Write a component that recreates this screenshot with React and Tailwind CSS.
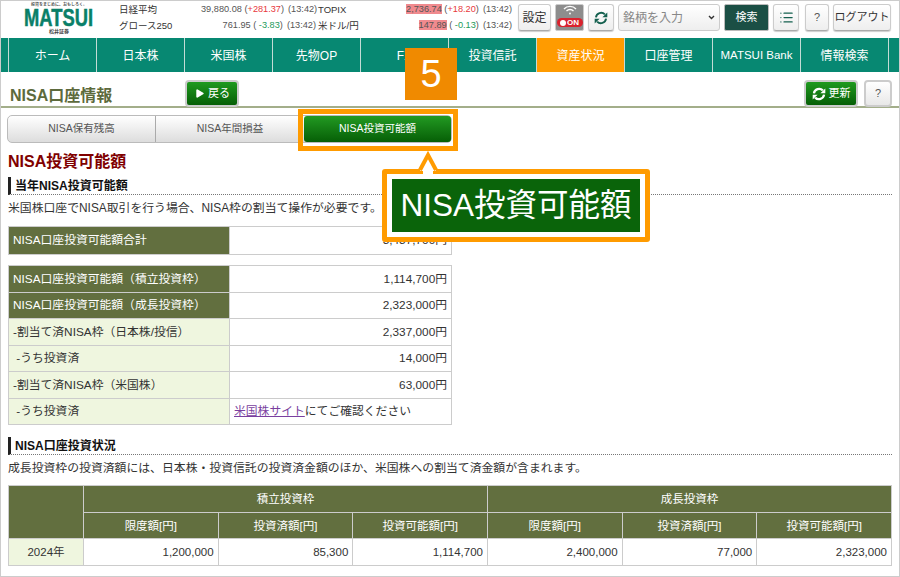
import { List, Play } from 'lucide-react';

const font = { fontFamily: '"Liberation Sans", "Noto Sans CJK JP", sans-serif' };

const navItems = ['ホーム', '日本株', '米国株', '先物OP', 'FX', '投資信託', '資産状況', '口座管理', 'MATSUI Bank', '情報検索'];

const allowance = [
    { label: 'NISA口座投資可能額（積立投資枠）', value: '1,114,700円', dark: true },
    { label: 'NISA口座投資可能額（成長投資枠）', value: '2,323,000円', dark: true },
    { label: '-割当て済NISA枠（日本株/投信）', value: '2,337,000円' },
    { label: '\u00a0-うち投資済', value: '14,000円' },
    { label: '-割当て済NISA枠（米国株）', value: '63,000円' },
    { label: '\u00a0-うち投資済', link: true },
];

function SyncIcon({ size, color, width = 2.2 }) {
    return (
        <svg width={size} height={size} viewBox="0 0 16 16" fill="none" stroke={color} strokeWidth={width}>
            <path d="M2.2 7.2 A6 6 0 0 1 12.4 3.9" />
            <path d="M13.8 8.8 A6 6 0 0 1 3.6 12.1" />
            <path d="M15.2 1.6 V7.2 H9.6 Z" fill={color} stroke="none" />
            <path d="M0.8 14.4 V8.8 H6.4 Z" fill={color} stroke="none" />
        </svg>
    );
}

function Ticker({ name, price, sign, change, up, flag }) {
    return (
        <>
            <span className="text-[9.5px] text-[#333] whitespace-nowrap">{name}</span>
            <span className="text-right text-[9.2px] text-[#555] whitespace-nowrap">
                <span className={flag ? 'bg-[#f08a8e]' : ''}>{price}</span>
                {' ('}
                <span className={up ? 'text-[#e8383d]' : 'text-[#1d9a5b]'}>{sign}{change}</span>
                {')'}
                <span className="ml-[4px]">(13:42)</span>
            </span>
        </>
    );
}

function HeadButton({ className = '', children }) {
    return (
        <button className={`h-[27px] flex items-center justify-center rounded-[3px] border border-[#ccc] border-b-[#aaa] bg-gradient-to-b from-white to-[#eee] text-[#333] shadow-[0_1px_1px_rgba(0,0,0,0.2)] whitespace-nowrap ${className}`}>
            {children}
        </button>
    );
}

function GreenButton({ className = '', children }) {
    return (
        <button className={`h-[27px] flex items-center justify-center gap-[3px] rounded-[4px] border-2 border-[#ccc] bg-gradient-to-b from-[#1f9a1f] to-[#065f06] text-white text-[11px] ${className}`}>
            {children}
        </button>
    );
}

function SectionHead({ children }) {
    return (
        <h3 className="h-[18px] flex items-center border-l-[3px] border-[#222] border-b border-b-[#777] [border-bottom-style:dotted] pl-[4px] text-xs font-bold text-[#111] leading-none">
            {children}
        </h3>
    );
}

export default function App() {
    return (
        <div className="relative w-[900px] h-[577px] overflow-hidden bg-white border border-[#ccc] flex flex-col" style={font}>
            {/* ヘッダー */}
            <header className="h-[37px] flex shrink-0">
                <div className="w-[118px] pl-[23px] flex flex-col items-start shrink-0">
                    <span className="w-[70px] text-[4px] leading-[5px] mt-[1px] text-[#555] whitespace-nowrap font-bold text-center">投資をまじめに、おもしろく。</span>
                    <svg width="70" height="20" viewBox="0 0 70 20" className="shrink-0 overflow-visible">
                        <text x="0" y="18.5" fontSize="23" fontWeight="bold" fill="#0a7f68" stroke="#0a7f68" strokeWidth="0.5" textLength="69" lengthAdjust="spacingAndGlyphs">MATSUI</text>
                    </svg>
                    <span className="w-[70px] mt-[1px] text-[5px] leading-[7px] text-[#444] text-center font-bold">松井証券</span>
                </div>
                <div className="w-[394px] shrink-0 pt-[1px] grid grid-cols-[80px_115px_50px_142px] gap-x-[2px] grid-rows-[16px_16px] items-center leading-none">
                    <Ticker name="日経平均" price="39,880.08" sign="+" change="281.37" up />
                    <Ticker name="TOPIX" price="2,736.74" sign="+" change="18.20" up flag />
                    <Ticker name="グロース250" price="761.95" sign=" " change="-3.83" />
                    <Ticker name="米ドル/円" price="147.89" sign=" " change="-0.13" flag />
                </div>
                <div className="flex items-start pt-[3px] pl-[5px] gap-[4px]">
                    <HeadButton className="w-[33px] text-xs">設定</HeadButton>
                    <div className="w-[29px] h-[27px] rounded-[2px] bg-[#8d8d8d] border border-[#ccc] flex flex-col items-center shrink-0">
                        <svg width="14" height="10" viewBox="0 0 14 10" fill="none" stroke="#fff" strokeWidth="1.3">
                            <path d="M1 4 C4 0.5 10 0.5 13 4" />
                            <path d="M3.5 6 C5.5 4 8.5 4 10.5 6" />
                            <circle cx="7" cy="8.5" r="0.9" fill="#fff" stroke="none" />
                        </svg>
                        <span className="w-[26px] h-[9px] mt-[3px] rounded-full bg-[#d9232e] text-white text-[8px] font-bold leading-[9px] flex items-center justify-center gap-[1px]">
                            <span className="w-[6px] h-[6px] rounded-full bg-white" />ON
                        </span>
                    </div>
                    <HeadButton className="w-[26px]"><SyncIcon size={14} color="#14604f" /></HeadButton>
                    <div className="w-[102px] h-[27px] flex items-center justify-between px-[4px] rounded-[3px] border border-[#ccc] bg-gradient-to-b from-white to-[#eee] text-xs text-[#888]">
                        <span>銘柄を入力</span>
                        <svg width="7" height="5" viewBox="0 0 7 5" fill="none" stroke="#333" strokeWidth="1.4"><path d="M1 1l2.5 2.5L6 1" /></svg>
                    </div>
                    <button className="w-[45px] h-[27px] rounded-[2px] bg-[#1b4f45] border border-[#bbb] text-white text-[11px]">検索</button>
                    <HeadButton className="w-[26px]"><List size={15} strokeWidth={2} className="text-[#14604f]" /></HeadButton>
                    <HeadButton className="w-[24px] ml-[2px] text-[11px] text-[#555]">?</HeadButton>
                    <HeadButton className="w-[58px] text-[11px]">ログアウト</HeadButton>
                </div>
            </header>

            {/* ナビ */}
            <nav className="h-[34px] flex shrink-0 bg-[#078872] pl-[7px]">
                {navItems.map((item) => (
                    <div
                        key={item}
                        className={`w-[88px] pt-[2px] flex items-center justify-center border-l border-[#c4dcd6] shrink-0 text-white whitespace-nowrap ${item === 'MATSUI Bank' ? 'text-[11.5px]' : 'text-xs'} ${item === '資産状況' ? 'bg-[#ff9b00]' : ''}`}
                    >
                        {item}
                    </div>
                ))}
                <div className="flex-1 border-l border-[#c4dcd6]" />
            </nav>

            {/* タイトル */}
            <div className="h-[36px] flex items-start shrink-0 border-b-2 border-[#a3ae8a] pl-[9px] pr-[7px]">
                <h1 className="w-[175px] mt-[15px] text-base leading-[18px] font-bold text-[#5d6a3c]">NISA口座情報</h1>
                <GreenButton className="w-[54px] mt-[8px]"><Play size={11} fill="#fff" strokeWidth={0} />戻る</GreenButton>
                <div className="flex-1" />
                <GreenButton className="w-[54px] mt-[8px]"><SyncIcon size={14} color="#fff" width={2.6} />更新</GreenButton>
                <button className="w-[28px] h-[27px] ml-[6px] mt-[8px] rounded-[4px] border-2 border-[#ccc] bg-gradient-to-b from-white to-[#e8e8e8] text-[11px] text-[#555]">?</button>
            </div>

            <main className="flex-1 pl-[7px] pr-[7px]">
                {/* タブ */}
                <div className="w-[445px] h-[28px] -ml-[1px] mt-[7px] flex rounded-[5px] border border-[#bbb] bg-gradient-to-b from-white to-[#ddd] text-[10.5px] text-[#555]">
                    <div className="w-[148px] flex items-center justify-center border-r border-[#aaa]">NISA保有残高</div>
                    <div className="w-[148px] flex items-center justify-center">NISA年間損益</div>
                    <div className="flex-1 flex items-center justify-center rounded-[3px] bg-gradient-to-b from-[#229a22] to-[#065f06] text-white">NISA投資可能額</div>
                </div>

                <h2 className="mt-[9px] text-base leading-[20px] font-bold text-[#800000]">NISA投資可能額</h2>
                <div className="mt-[5px]"><SectionHead>当年NISA投資可能額</SectionHead></div>
                <p className="mt-[5px] text-[11.85px] leading-[16px] text-[#333]">米国株口座でNISA取引を行う場合、NISA枠の割当て操作が必要です。</p>

                <table className="w-[444px] mt-[10px] table-fixed border-collapse text-[11.8px] text-[#333]">
                    <tbody>
                        <tr className="h-[28px]">
                            <th className="w-[221px] px-[4px] border border-[#ccc] bg-[#626f3f] text-white text-left font-normal">NISA口座投資可能額合計</th>
                            <td className="px-[4px] border border-[#ccc] text-right">3,437,700円</td>
                        </tr>
                    </tbody>
                </table>

                <table className="w-[444px] mt-[10px] table-fixed border-collapse text-[11.8px] text-[#333]">
                    <tbody>
                        {allowance.map((row, i) => (
                            <tr key={i} className="h-[26.5px]">
                                <th className={`w-[221px] px-[4px] pt-[2px] border border-[#ccc] text-left font-normal ${row.dark ? 'bg-[#626f3f] text-white' : 'bg-[#eff6df] text-[#333]'}`}>{row.label}</th>
                                <td className={`px-[4px] pt-[2px] border border-[#ccc] ${row.link ? 'text-left' : 'text-right'}`}>
                                    {row.link
                                        ? <><a className="underline text-[#7a3fa0]">米国株サイト</a>にてご確認ください</>
                                        : row.value}
                                </td>
                            </tr>
                        ))}
                    </tbody>
                </table>

                <div className="mt-[12px]"><SectionHead>NISA口座投資状況</SectionHead></div>
                <p className="mt-[5px] text-[11.85px] leading-[16px] text-[#333]">成長投資枠の投資済額には、日本株・投資信託の投資済金額のほか、米国株への割当て済金額が含まれます。</p>

                <table className="w-[884px] mt-[9px] table-fixed border-collapse text-[11.5px] text-[#333]">
                    <colgroup>
                        <col className="w-[75px]" />
                        <col /><col /><col /><col /><col /><col />
                    </colgroup>
                    <thead className="text-white">
                        <tr className="h-[27px]">
                            <th rowSpan={2} className="border border-[#ccc] bg-[#626f3f]" />
                            <th colSpan={3} className="pt-[2px] border border-[#ccc] bg-[#626f3f] font-normal">積立投資枠</th>
                            <th colSpan={3} className="pt-[2px] border border-[#ccc] bg-[#626f3f] font-normal">成長投資枠</th>
                        </tr>
                        <tr className="h-[26px]">
                            {['限度額[円]', '投資済額[円]', '投資可能額[円]', '限度額[円]', '投資済額[円]', '投資可能額[円]'].map((h, i) => (
                                <th key={i} className="pt-[2px] border border-[#ccc] bg-[#626f3f] font-normal">{h}</th>
                            ))}
                        </tr>
                    </thead>
                    <tbody>
                        <tr className="h-[27px]">
                            <td className="pt-[2px] border border-[#ccc] bg-[#eff6df] text-center">2024年</td>
                            {['1,200,000', '85,300', '1,114,700', '2,400,000', '77,000', '2,323,000'].map((v, i) => (
                                <td key={i} className="px-[4px] pt-[2px] border border-[#ccc] text-right">{v}</td>
                            ))}
                        </tr>
                    </tbody>
                </table>
            </main>

            {/* 注釈オーバーレイ */}
            <div className="absolute left-[404px] top-[47px] w-[52px] h-[52px] bg-[#f08a00] flex items-center justify-center text-white text-[38px] leading-none">5</div>
            <div className="absolute left-[297px] top-[108px] w-[160px] h-[42px] border-[5px] border-[#ff9b00]" />
            <div className="absolute left-[381px] top-[168px] w-[268px] h-[73px] rounded-[3px] border-[5px] border-[#ff9b00] bg-white p-[5px]">
                <div className="h-full bg-[#0a640a] flex items-center justify-center text-white text-[31.5px] leading-none whitespace-nowrap">NISA投資可能額</div>
            </div>
            <svg className="absolute left-[414px] top-[149px]" width="26" height="25" viewBox="0 0 26 25">
                <path d="M5 21 L13 5 L21 21 Z" fill="#fff" />
                <path d="M5 20 L13 5 L21 20" fill="none" stroke="#ff9b00" strokeWidth="4" />
                <rect x="8" y="19" width="10" height="6" fill="#fff" />
            </svg>
        </div>
    );
}
